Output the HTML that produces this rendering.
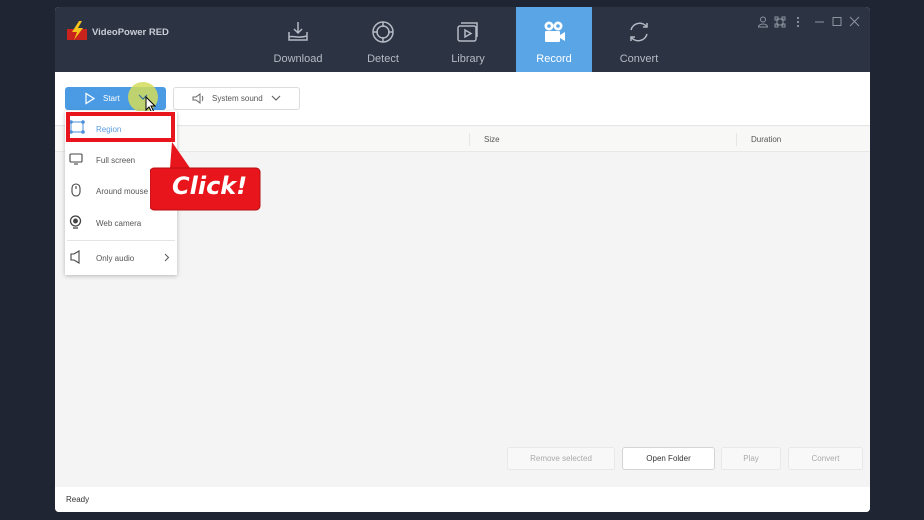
<!DOCTYPE html>
<html><head><meta charset="utf-8"><style>
*{margin:0;padding:0;box-sizing:border-box}
body{width:924px;height:520px;background:#1f2532;font-family:"Liberation Sans",sans-serif;position:relative;overflow:hidden}
.win{position:absolute;left:55px;top:7px;width:815px;height:505px;background:#f3f4f3;border-radius:4px;overflow:hidden}
.hdr{position:absolute;left:0;top:0;width:815px;height:65px;background:#2c3444}
.logo{position:absolute;left:11px;top:14px}
.brand{position:absolute;left:37px;top:20px;color:#c9ced6;font-size:9.5px;font-weight:bold}
.tab{position:absolute;top:0;height:65px;width:76px;text-align:center;color:#b4bac4;font-size:11px}
.tab span{position:absolute;left:0;right:0;top:46px}
.tab svg{position:absolute;left:26px;top:13px}
.rec{background:#5aa5e5;color:#fff}
.tb{position:absolute;left:0;top:65px;width:815px;height:54px;background:#fff;border-bottom:1px solid #e6e8e6}
.th{position:absolute;left:0;top:120px;width:815px;height:25px;background:#f8f9f7;border-bottom:1px solid #e8e9e7;font-size:8px;color:#555}
.status{position:absolute;left:0;top:480px;width:815px;height:25px;background:#fff;font-size:8px;color:#333;padding:8px 11px}
.btn{position:absolute;top:440px;height:23px;border:1px solid #e8e8e8;background:#f7f8f7;border-radius:3px;font-size:8px;color:#aaa;text-align:center;line-height:21px}
.menu{position:absolute;left:65px;top:111px;width:112px;height:164px;background:#fff;box-shadow:0 1px 4px rgba(0,0,0,.25);font-size:8px;color:#555}
.mi{position:absolute;left:31px}
</style></head><body>
<div class="win">
<div class="hdr">
<svg class="logo" width="22" height="20" viewBox="0 0 22 20"><rect x="1" y="8" width="20" height="11" fill="#c8231c"/><path d="M13 0 L6 11 h5 l-3 8 9-12h-5l4-7z" fill="#f6c21c"/></svg>
<div class="brand">VideoPower RED</div>
<div class="tab" style="left:205px"><svg width="24" height="24" viewBox="0 0 24 24" fill="none" stroke="#b4bac4" stroke-width="1.5"><path d="M12 2v11M8 9l4 4 4-4M3 12v8h18v-8M3 17c4-2 8 2 18-1"/></svg><span>Download</span></div>
<div class="tab" style="left:290px"><svg width="24" height="24" viewBox="0 0 24 24" fill="none" stroke="#b4bac4" stroke-width="1.5"><circle cx="12" cy="12" r="10"/><circle cx="12" cy="12" r="6"/><path d="M12 2v5M12 17v5M2 12h5M17 12h5"/></svg><span>Detect</span></div>
<div class="tab" style="left:375px"><svg width="24" height="24" viewBox="0 0 24 24" fill="none" stroke="#b4bac4" stroke-width="1.5"><rect x="2" y="6" width="18" height="15" rx="2"/><path d="M5 3h16v14"/><path d="M9 10v7l6-3.5z"/></svg><span>Library</span></div>
<div class="tab rec" style="left:461px"><svg width="24" height="24" viewBox="0 0 24 24" fill="#fff"><circle cx="7" cy="6" r="4.5"/><circle cx="16" cy="6" r="4.5"/><circle cx="7" cy="6" r="1.8" fill="#5aa5e5"/><circle cx="16" cy="6" r="1.8" fill="#5aa5e5"/><rect x="3" y="11" width="15" height="11" rx="1"/><path d="M18 15l5-3v9l-5-3z"/></svg><span>Record</span></div>
<div class="tab" style="left:546px"><svg width="24" height="24" viewBox="0 0 24 24" fill="none" stroke="#b4bac4" stroke-width="1.5"><path d="M4 10a9 9 0 0 1 16-3M20 14a9 9 0 0 1-16 3"/><path d="M20 3v4h-4M4 21v-4h4"/></svg><span>Convert</span></div>
<svg style="position:absolute;left:702px;top:9px" width="105" height="12" viewBox="0 0 105 12" fill="none" stroke="#8d94a0" stroke-width="1"><circle cx="6" cy="3.5" r="2.5"/><path d="M1.5 11c0-4 9-4 9 0z"/><path d="M20 3h6v6h-6zM18 1h3v3h-3zM25 1h3v3h-3zM18 8h3v3h-3zM25 8h3v3h-3z"/><circle cx="41" cy="2" r=".6"/><circle cx="41" cy="6" r=".6"/><circle cx="41" cy="10" r=".6"/><path d="M58 6h9M76 1.5h8v8h-8zM93 1l9 9M102 1l-9 9"/></svg>
</div>
<div class="tb">
<div style="position:absolute;left:10px;top:15px;width:101px;height:23px;background:#4a9be3;border-radius:3px;color:#fff;font-size:8px;line-height:23px;padding-left:38px">Start</div>
<svg style="position:absolute;left:29px;top:20px" width="12" height="13" viewBox="0 0 12 13" fill="none" stroke="#fff" stroke-width="1.2"><path d="M2 1.5v10l8-5z"/></svg>
<div style="position:absolute;left:73px;top:10px;width:30px;height:30px;border-radius:50%;background:rgba(210,220,90,.85)"></div>
<svg style="position:absolute;left:83px;top:21px" width="10" height="8" viewBox="0 0 10 8" fill="none" stroke="#3a70a0" stroke-width="1.2"><path d="M1 2l4 4 4-4"/></svg>
<svg style="position:absolute;left:90px;top:24px" width="12" height="18" viewBox="0 0 12 18"><path d="M1 1v13l3-3 3 6 2-1-3-6h4z" fill="#fff" stroke="#000" stroke-width="1"/></svg>
<div style="position:absolute;left:118px;top:15px;width:127px;height:23px;border:1px solid #dcdcdc;border-radius:3px;font-size:8px;color:#555;line-height:21px;padding-left:38px">System sound</div>
<svg style="position:absolute;left:137px;top:21px" width="13" height="11" viewBox="0 0 13 11" fill="none" stroke="#666" stroke-width="1"><path d="M1 4h3l4-3v9l-4-3H1zM10 3c1 1 1 4 0 5"/></svg>
<svg style="position:absolute;left:216px;top:23px" width="10" height="7" viewBox="0 0 10 7" fill="none" stroke="#666" stroke-width="1.2"><path d="M1 1l4 4 4-4"/></svg>
</div>
<div class="th"><div style="position:absolute;left:414px;top:6px;width:1px;height:13px;background:#e6e6e6"></div><span style="position:absolute;left:429px;top:8px">Size</span><div style="position:absolute;left:681px;top:6px;width:1px;height:13px;background:#e6e6e6"></div><span style="position:absolute;left:696px;top:8px">Duration</span></div>
<div class="btn" style="left:452px;width:108px">Remove selected</div>
<div class="btn" style="left:567px;width:93px;background:#fff;border-color:#d4d4d4;color:#333">Open Folder</div>
<div class="btn" style="left:666px;width:60px">Play</div>
<div class="btn" style="left:733px;width:75px">Convert</div>
<div class="status">Ready</div>
</div>
<div class="menu">
<svg style="position:absolute;left:4px;top:9px" width="16" height="14" viewBox="0 0 16 14" fill="none" stroke="#4a8fd8" stroke-width="1"><rect x="2" y="2" width="12" height="10"/><circle cx="2" cy="2" r="1.3" fill="#4a8fd8"/><circle cx="14" cy="2" r="1.3" fill="#4a8fd8"/><circle cx="2" cy="12" r="1.3" fill="#4a8fd8"/><circle cx="14" cy="12" r="1.3" fill="#4a8fd8"/></svg>
<div class="mi" style="top:14px;color:#5a9ee0">Region</div>
<svg style="position:absolute;left:4px;top:42px" width="14" height="12" viewBox="0 0 14 12" fill="none" stroke="#444" stroke-width="1.1"><rect x="1" y="1" width="12" height="8" rx="1"/><path d="M5 11h4"/></svg>
<div class="mi" style="top:45px">Full screen</div>
<svg style="position:absolute;left:6px;top:72px" width="10" height="14" viewBox="0 0 10 14" fill="none" stroke="#444" stroke-width="1.1"><rect x="1" y="1" width="8" height="12" rx="4"/><path d="M5 3v3"/></svg>
<div class="mi" style="top:76px">Around mouse</div>
<svg style="position:absolute;left:4px;top:104px" width="13" height="14" viewBox="0 0 13 14" fill="none" stroke="#444" stroke-width="1.3"><circle cx="6.5" cy="6" r="5"/><circle cx="6.5" cy="6" r="1.8" fill="#444"/><path d="M4 13h5"/></svg>
<div class="mi" style="top:108px">Web camera</div>
<div style="position:absolute;left:2px;right:2px;top:129px;height:1px;background:#e4e4e4"></div>
<svg style="position:absolute;left:5px;top:139px" width="12" height="14" viewBox="0 0 12 14" fill="none" stroke="#444" stroke-width="1.1"><path d="M1 4h3l5-3v12l-5-3H1z"/></svg>
<div class="mi" style="top:143px">Only audio</div>
<svg style="position:absolute;left:99px;top:142px" width="6" height="9" viewBox="0 0 6 9" fill="none" stroke="#555" stroke-width="1"><path d="M1 1l3.5 3.5L1 8"/></svg>
</div>
<div style="position:absolute;left:66px;top:112px;width:109px;height:30px;border:4px solid #e8161c"></div>
<svg style="position:absolute;left:150px;top:140px" width="112" height="72" viewBox="0 0 112 72"><path d="M20 28 L22 2 L40 28z" fill="#e8161c"/><rect x="0" y="28" width="110" height="42" rx="4" fill="#e8161c" stroke="#b70f14" stroke-width="1"/></svg>
<div style="position:absolute;left:172px;top:172px;color:#fff;font-size:24px;font-weight:bold;font-style:italic;font-family:'DejaVu Sans',sans-serif">Click!</div>
</body></html>
